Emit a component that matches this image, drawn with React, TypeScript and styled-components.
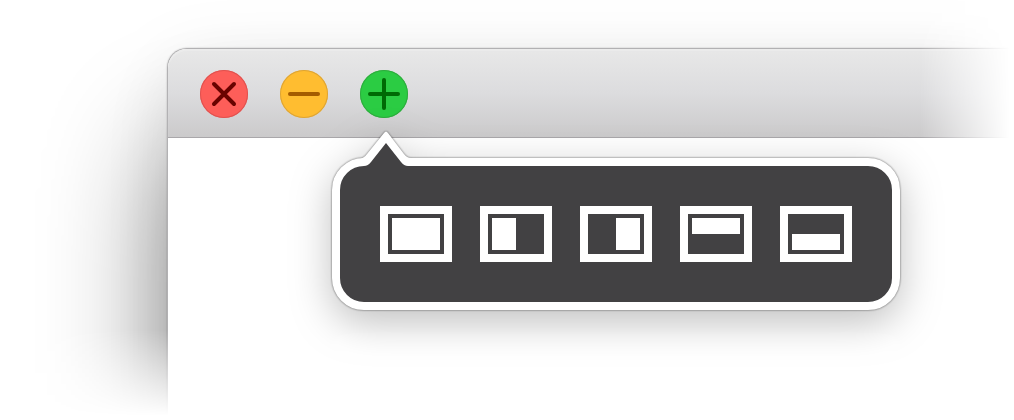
import React from "react";
import styled, { createGlobalStyle } from "styled-components";

const GlobalStyle = createGlobalStyle`
  * { box-sizing: border-box; }
  body {
    margin: 0;
    background: #fff;
    font-family: "Liberation Sans", sans-serif;
  }
`;

const Stage = styled.main`
  min-height: 100vh;
  padding: 48px 0 0 167px;
  display: flex;
  overflow: hidden;
  mask-image: linear-gradient(to right, #000 calc(100% - 94px), transparent calc(100% - 4px)),
    linear-gradient(to bottom, #000 calc(100% - 90px), transparent calc(100% - 4px));
  mask-composite: intersect;
`;

const Window = styled.section`
  flex: 1;
  background: #fff;
  border: solid #b2b1b3;
  border-width: 1px 0 0 1px;
  border-radius: 20px 0 0 0;
  box-shadow: 0 96px 120px rgba(0, 0, 0, 0.48), 0 20px 80px rgba(0, 0, 0, 0.1),
    0 0 2px rgba(0, 0, 0, 0.25);
`;

const TitleBar = styled.header`
  display: flex;
  gap: 32px;
  padding: 21px 32px 19px;
  border-bottom: 1px solid #a9a7aa;
  border-radius: 19px 0 0 0;
  background: linear-gradient(#e8e8e8, #dcdcde 50%, #cbcacb);
  box-shadow: inset 0 2px 1px #ececec;
`;

const ButtonSlot = styled.div`
  position: relative;
  display: flex;
`;

const WindowButton = styled.button<{ $fill: string; $rim: string; $ink: string }>`
  width: 48px;
  height: 48px;
  padding: 0;
  border: 0;
  border-radius: 50%;
  background: ${(p) => p.$fill};
  box-shadow: inset 0 0 0 1px ${(p) => p.$rim};
  color: ${(p) => p.$ink};
  display: flex;
`;

const Glyph = styled.svg`
  width: 48px;
  height: 48px;
  fill: none;
  stroke: currentColor;
  stroke-width: 4;
  stroke-linecap: round;
`;

const Popover = styled.div`
  position: absolute;
  top: 88px;
  left: -28px;
  z-index: 1;
  border: 8px solid #fff;
  border-radius: 32px;
  background: #424143;
  filter: drop-shadow(0 0 1px rgba(0, 0, 0, 0.6)) drop-shadow(0 12px 20px rgba(0, 0, 0, 0.25));
`;

const Arrow = styled.svg`
  position: absolute;
  left: 16px;
  bottom: 100%;
  width: 60px;
  height: 40px;
  margin-bottom: -4px;
`;

const Layouts = styled.div`
  display: flex;
  gap: 28px;
  padding: 40px;
`;

const LayoutButton = styled.button`
  display: flex;
  width: 72px;
  height: 56px;
  padding: 4px;
  border: 8px solid #fff;
  background: #424143;
`;

type Side = "full" | "left" | "right" | "top" | "bottom";

const Pane = styled.span<{ $side: Side }>`
  width: ${(p) => (p.$side === "left" || p.$side === "right" ? "50%" : "100%")};
  height: ${(p) => (p.$side === "top" || p.$side === "bottom" ? "50%" : "100%")};
  margin-left: ${(p) => (p.$side === "right" ? "auto" : "0")};
  align-self: ${(p) => (p.$side === "bottom" ? "flex-end" : "flex-start")};
  background: #fff;
`;

const layouts: { side: Side; label: string }[] = [
  { side: "full", label: "Fill the screen" },
  { side: "left", label: "Left half" },
  { side: "right", label: "Right half" },
  { side: "top", label: "Top half" },
  { side: "bottom", label: "Bottom half" },
];

export default function App() {
  return (
    <>
      <GlobalStyle />
      <Stage>
        <Window>
          <TitleBar>
            <WindowButton $fill="#fd5e59" $rim="#df524f" $ink="#690300" aria-label="Close">
              <Glyph viewBox="0 0 48 48">
                <path d="M14 14 34 34M34 14 14 34" />
              </Glyph>
            </WindowButton>
            <WindowButton $fill="#ffbd30" $rim="#dda436" $ink="#a45c00" aria-label="Minimize">
              <Glyph viewBox="0 0 48 48">
                <path d="M10 24H38" />
              </Glyph>
            </WindowButton>
            <ButtonSlot>
              <WindowButton $fill="#2bcc43" $rim="#2fab3e" $ink="#006a05" aria-label="Zoom">
                <Glyph viewBox="0 0 48 48">
                  <path d="M10 24H38M24 10V38" />
                </Glyph>
              </WindowButton>
              <Popover role="group" aria-label="Window layout">
                <Arrow viewBox="0 0 60 40" aria-hidden="true">
                  <path
                    d="M2 30Q8 28 11 24L28 3Q30 0 32 3L48 24Q51 28 55 28V36H8Z"
                    fill="#fff"
                  />
                  <path d="M8 38V36Q12 36 15 32L30 13L45 32Q48 36 52 36V38Z" fill="#424143" />
                </Arrow>
                <Layouts>
                  {layouts.map(({ side, label }) => (
                    <LayoutButton key={side} aria-label={label}>
                      <Pane $side={side} />
                    </LayoutButton>
                  ))}
                </Layouts>
              </Popover>
            </ButtonSlot>
          </TitleBar>
        </Window>
      </Stage>
    </>
  );
}
